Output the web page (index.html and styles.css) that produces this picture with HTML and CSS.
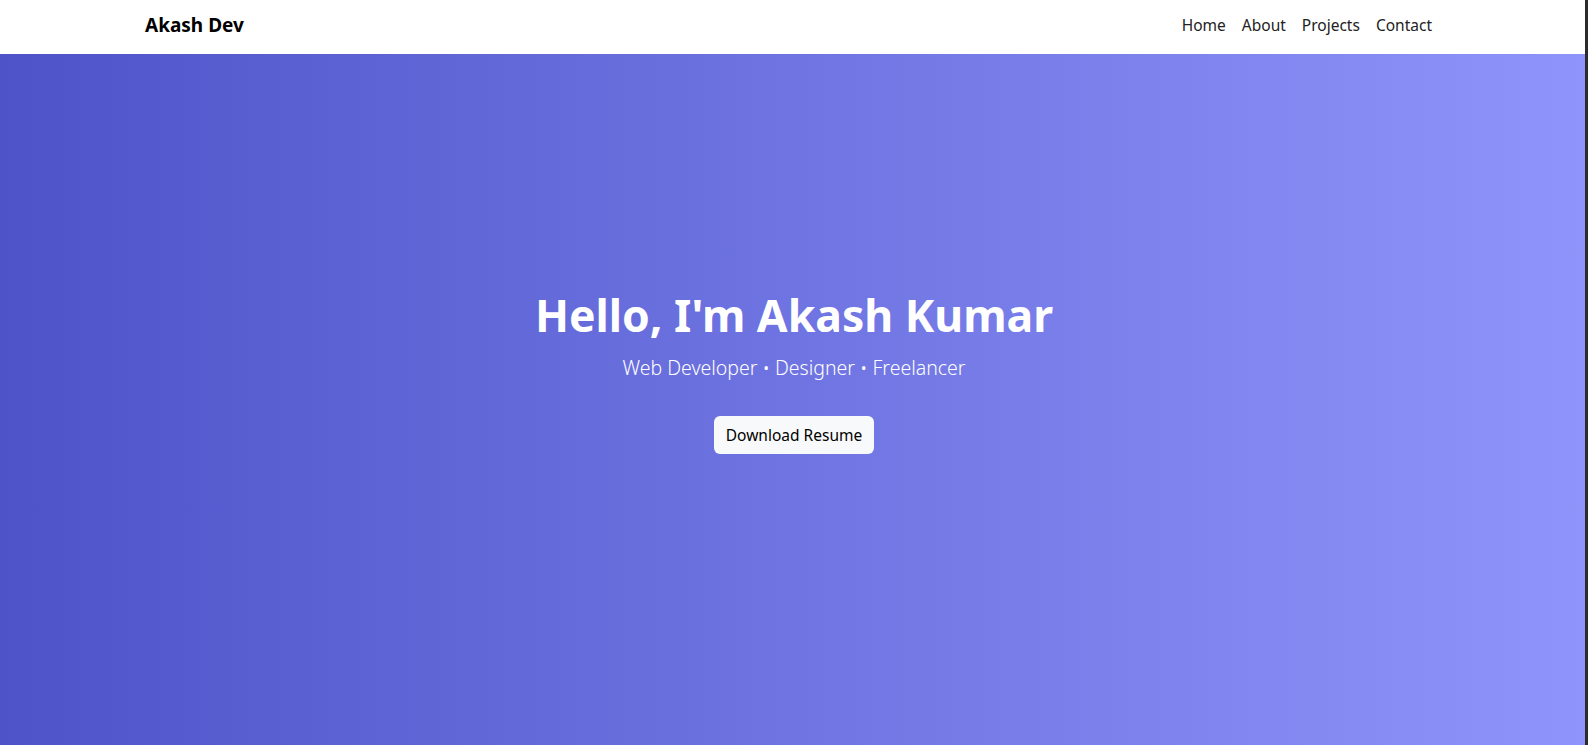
FILE: index.html
```html
<!DOCTYPE html>
<html lang="en">
<head>
<meta charset="utf-8">
<title>Akash Dev</title>
<link rel="stylesheet" href="styles.css">
</head>
<body>
<header class="navbar">
  <div class="container nav-inner">
    <a class="brand" href="#">Akash Dev</a>
    <nav class="nav-links">
      <a href="#">Home</a>
      <a href="#">About</a>
      <a href="#">Projects</a>
      <a href="#">Contact</a>
    </nav>
  </div>
</header>
<section class="hero">
  <h1 class="hero-title">Hello, I'm Akash Kumar</h1>
  <p class="hero-sub">Web Developer • Designer • Freelancer</p>
  <a class="btn" href="#">Download Resume</a>
</section>
<div class="scrollbar"></div>
</body>
</html>
```
FILE: styles.css
```css
* { box-sizing: border-box; }
body {
  margin: 0;
  font-family: "Noto Sans", "Open Sans", sans-serif;
  color: #212529;
  background: #fff;
}
a { text-decoration: none; }

.scrollbar {
  position: fixed;
  top: 0;
  right: 0;
  width: 3px;
  height: 100vh;
  background: #2b2b2b;
}

.container {
  max-width: 1320px;
  margin: 0 auto;
  padding: 0 12px;
}
.navbar {
  height: 54px;
  background: #fff;
}
.nav-inner {
  height: 100%;
  display: flex;
  align-items: center;
  justify-content: space-between;
  padding-bottom: 4px;
}
.brand {
  font-size: 19px;
  font-weight: 700;
  color: #000;
  margin-left: -1px;
}
.nav-links {
  display: flex;
  padding-right: 2px;
}
.nav-links a {
  font-size: 15.5px;
  color: #222;
  padding: 0 8px;
}

.hero {
  min-height: 745px;
  background: linear-gradient(to right, #4e54c8, #8f94fb);
  color: #fff;
  text-align: center;
  padding: 234px 0 200px;
}
.hero-title {
  margin: 0 0 12px;
  font-size: 44.5px;
  line-height: 1.2;
  font-weight: 700;
}
.hero-sub {
  margin: 0 0 33px;
  font-size: 19.5px;
  line-height: 1.5;
  font-weight: 300;
}
.btn {
  display: inline-block;
  background: #f8f9fa;
  color: #000;
  font-size: 15.5px;
  line-height: 24px;
  padding: 7px 12px;
  border-radius: 6px;
}
```
